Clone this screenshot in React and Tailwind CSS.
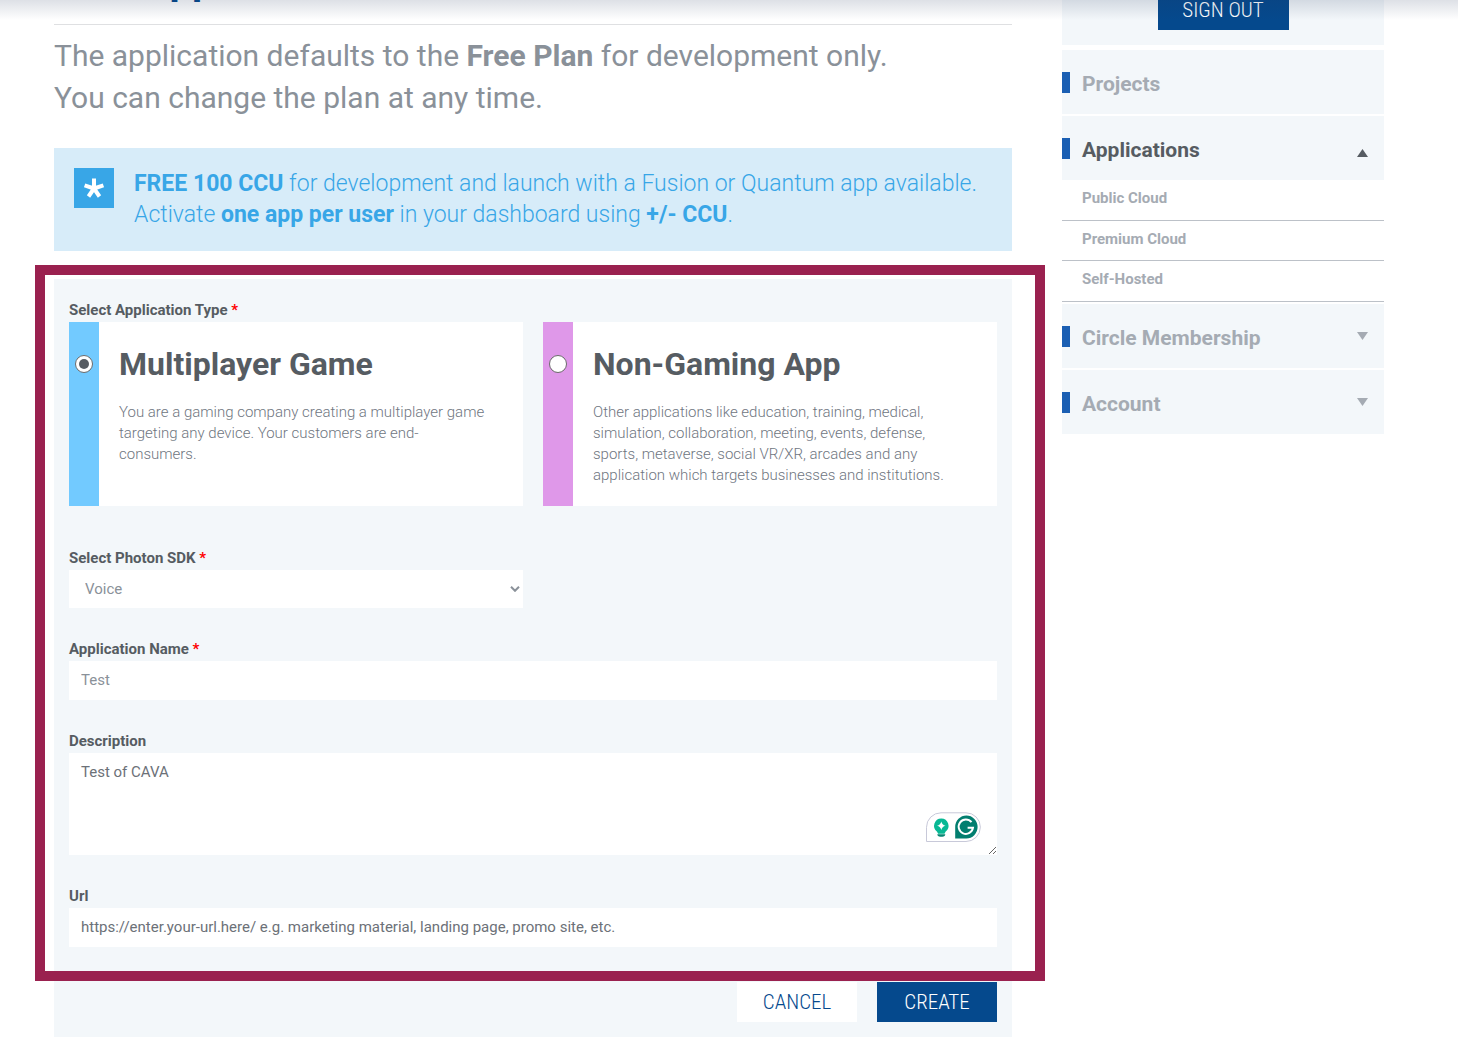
import React, { useState } from "react";

const fieldClass = "block w-full bg-white px-3 text-[15px] text-[#6c7178] outline-none";
const labelClass = "block text-[15px] leading-5 font-bold text-[#565c62]";
const buttonClass = "h-10 pt-0.5 font-['Roboto_Condensed','Roboto',sans-serif] text-[21px] font-light";

function Required() {
  return <span className="text-[#ff0000]">*</span>;
}

function TypeCard({ id, title, stripe, checked, onChange, children }) {
  return (
    <label htmlFor={id} className="flex h-[184px] bg-white">
      <span className={`flex w-[30px] shrink-0 justify-center pt-[33px] ${stripe}`}>
        <input
          id={id}
          type="radio"
          name="type"
          checked={checked}
          onChange={onChange}
          className="peer sr-only"
        />
        <span className="flex size-[18px] items-center justify-center rounded-full border border-[#6b6b6b] bg-white peer-checked:*:bg-[#565c62]">
          <span className="size-[10px] rounded-full" />
        </span>
      </span>
      <span className="block pt-5 pr-8 pl-5">
        <span className="block text-[32px] leading-[44px] font-bold text-[#565c62]">{title}</span>
        <span className="mt-4 block text-[15px] leading-[21px] font-light text-[#6f767f]">{children}</span>
      </span>
    </label>
  );
}

function AssistantBadge() {
  return (
    <svg width="56" height="31" viewBox="0 0 56 31" className="absolute right-[15px] bottom-3" aria-hidden="true">
      <path d="M.5 29.500V15.300A14.500 14.500 0 0 1 15 .8H40a14.300 14.300 0 0 1 0 28.700Z" fill="#fff" stroke="#c8c9d9" />
      <path d="M15.300 6.500a7.300 7.300 0 0 0-4.200 13.200l1 2.100h6.400l1-2.100A7.300 7.300 0 0 0 15.300 6.500Z" fill="#08b894" />
      <path d="M15.300 9.600q.8 3.400 4.200 4.200-3.400.8-4.200 4.200q-.8-3.400-4.200-4.200 3.400-.8 4.200-4.200Z" fill="#fff" />
      <path d="M11.300 22.200h8a3.200 2.600 0 0 1-3 2.500h-2a3.200 2.600 0 0 1-3-2.500Z" fill="#078672" />
      <path d="M29.200 26.500V15A11.200 11.500 0 1 1 40.300 26.500Z" fill="#027e6f" />
      <path d="M45.500 10.200a7.200 7.200 0 1 0 1.500 5.500h-5.400" fill="none" stroke="#fff" strokeWidth="2" />
    </svg>
  );
}

function MenuItem({ label, active, arrow }) {
  return (
    <button
      type="button"
      className={`mb-0.5 flex h-16 w-full items-center bg-[#f3f7fa] text-left text-[21px] font-bold ${active ? "text-[#565c62]" : "text-[#a5abb3]"}`}
    >
      <span className="mr-3 h-[21px] w-2 bg-[#1b5fb3]" />
      <span className="grow pt-1.5">{label}</span>
      {arrow && (
        <svg width="11" height="8" viewBox="0 0 11 8" className={active ? "mt-2.5 mr-4" : "mr-4"} fill="currentColor" aria-hidden="true">
          <path d={arrow === "up" ? "M5.500 0 11 8H0Z" : "M0 0h11L5.500 8Z"} />
        </svg>
      )}
    </button>
  );
}

export default function App() {
  const [type, setType] = useState("game");
  return (
    <div className="relative min-h-screen overflow-hidden bg-white font-['Roboto',sans-serif] text-[#8a9199]">
      <div className="flex items-start gap-[50px] pr-[74px] pl-[54px]">
        <main className="min-w-0 grow">
          <header className="flex h-[25px] items-end border-b border-[#dfe0e2]">
            <h1 className="mb-5 text-[40px] leading-[46px] font-bold text-[#05498d]">New Application</h1>
          </header>
          <p className="mt-[10px] text-[30px] leading-[42px]">
            The application defaults to the <b>Free Plan</b> for development only.
            <br />
            You can change the plan at any time.
          </p>
          <section className="mt-[29px] flex h-[103px] gap-5 bg-[#d7ecf9] p-5 text-[#38a6e7]">
            <span className="flex size-10 shrink-0 items-center justify-center bg-[#38a6e7]">
              <svg width="20" height="20" viewBox="0 0 20 20" stroke="#fff" strokeWidth="4" aria-hidden="true">
                <path d="M10 10.500V.5M10 10.500.6 7.300M10 10.500l9.400-3.200M10 10.500l-5.500 8M10 10.500l5.500 8" />
              </svg>
            </span>
            <p className="text-[23px] leading-[31px] font-light">
              <b className="font-bold">FREE 100 CCU</b> for development and launch with a Fusion or Quantum app available.
              <br />
              Activate <b className="font-bold">one app per user</b> in your dashboard using <b className="font-bold">+/- CCU</b>.
            </p>
          </section>

          <form className="relative mt-7 bg-[#f3f7fa] px-[15px] pt-[21px] pb-[15px]" onSubmit={(e) => e.preventDefault()}>
            <fieldset>
              <legend className={labelClass}>
                Select Application Type <Required />
              </legend>
              <div className="mt-0.5 grid grid-cols-2 gap-5">
                <TypeCard id="game" title="Multiplayer Game" stripe="bg-[#72caff]" checked={type === "game"} onChange={() => setType("game")}>
                  You are a gaming company creating a multiplayer game targeting any device. Your customers are end-consumers.
                </TypeCard>
                <TypeCard id="app" title="Non-Gaming App" stripe="bg-[#df98e9]" checked={type === "app"} onChange={() => setType("app")}>
                  Other applications like education, training, medical, simulation, collaboration, meeting, events, defense, sports, metaverse,
                  social VR/XR, arcades and any application which targets businesses and institutions.
                </TypeCard>
              </div>
            </fieldset>

            <div className="mt-[42px] grid grid-cols-2 gap-5">
              <div>
                <label htmlFor="sdk" className={labelClass}>
                  Select Photon SDK <Required />
                </label>
                <div className="relative mt-0.5">
                  <select id="sdk" className="block h-[38px] w-full appearance-none bg-white px-4 text-[15px] text-[#8a9199]">
                    <option>Voice</option>
                  </select>
                  <svg width="10" height="6" viewBox="0 0 10 6" className="pointer-events-none absolute top-4 right-[3px]" fill="none" stroke="#8a9199" strokeWidth="2" aria-hidden="true">
                    <path d="m1 .8 4 4 4-4" />
                  </svg>
                </div>
              </div>
            </div>

            <label htmlFor="name" className={`mt-[31px] ${labelClass}`}>
              Application Name <Required />
            </label>
            <input id="name" type="text" defaultValue="Test" className="mt-0.5 block h-[39px] w-full bg-white px-3 pb-0.5 text-[15px] text-[#8a9199] outline-none" />

            <label htmlFor="description" className={`mt-[31px] ${labelClass}`}>
              Description
            </label>
            <div className="relative mt-0.5">
              <textarea id="description" defaultValue="Test of CAVA" className={`h-[102px] resize-y py-[9px] leading-[21px] ${fieldClass}`} />
              <AssistantBadge />
            </div>

            <label htmlFor="url" className={`mt-[31px] ${labelClass}`}>
              Url
            </label>
            <input
              id="url"
              type="url"
              placeholder="https://enter.your-url.here/ e.g. marketing material, landing page, promo site, etc."
              className={`mt-0.5 h-[39px] pb-0.5 placeholder:text-[#6c7178] ${fieldClass}`}
            />

            <div className="mt-[35px] flex justify-end gap-5">
              <button type="button" className={`w-[120px] bg-white text-[#05498d] ${buttonClass}`}>
                CANCEL
              </button>
              <button type="submit" className={`w-[120px] bg-[#05498d] text-white ${buttonClass}`}>
                CREATE
              </button>
            </div>
            <div className="pointer-events-none absolute -top-[14px] -right-[33px] bottom-14 -left-[19px] border-10 border-[#9a214f]" />
          </form>
        </main>

        <aside className="w-[322px] shrink-0">
          <div className="mb-[5px] flex h-[45px] items-end justify-center bg-[#f3f7fa] pb-[15px]">
            <button type="button" className={`w-[131px] shrink-0 bg-[#05498d] text-white ${buttonClass}`}>
              SIGN OUT
            </button>
          </div>
          <nav>
            <MenuItem label="Projects" />
            <MenuItem label="Applications" active arrow="up" />
            <ul className="-mt-0.5 mb-0.5 text-[15px] font-bold text-[#a5abb3]">
              {["Public Cloud", "Premium Cloud", "Self-Hosted"].map((item, i) => (
                <li key={item} className={`border-b border-[#bcc1c8] ${i === 1 ? "h-10" : "h-[41px]"}`}>
                  <a href="#" className="block px-5 pt-2 leading-5">
                    {item}
                  </a>
                </li>
              ))}
            </ul>
            <MenuItem label="Circle Membership" arrow="down" />
            <MenuItem label="Account" arrow="down" />
          </nav>
        </aside>
      </div>
      <div className="pointer-events-none absolute inset-x-0 top-0 h-5 bg-linear-to-b from-[#1e325a]/15 to-transparent" />
    </div>
  );
}
